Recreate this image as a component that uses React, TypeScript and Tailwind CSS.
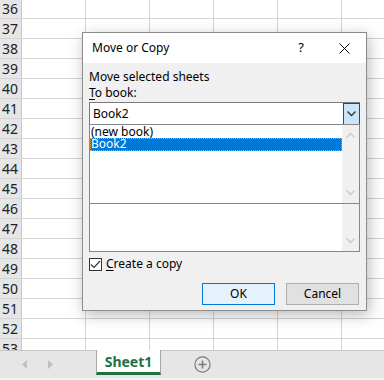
import { Fragment } from 'react';

const rows = Array.from({ length: 18 }, (_, i) => 36 + i);
const cols = [0, 1, 2, 3, 4, 5];

const ui = { fontFamily: '"Segoe UI", "Noto Sans", sans-serif' };

function Chevron({ up, className }: { up?: boolean; className?: string }) {
    return (
        <svg width="9" height="6" viewBox="0 0 9 6" className={className}>
            <path d={up ? 'M0.5 5.5 L4.5 1.5 L8.5 5.5' : 'M0.5 0.5 L4.5 4.5 L8.5 0.5'} fill="none" stroke="currentColor" strokeWidth="1.3" />
        </svg>
    );
}

function Dialog() {
    return (
        <div
            className="absolute left-[82px] top-[32px] w-[285px] h-[279px] border border-[#8c8c8c] bg-[#f0f0f0] shadow-[2px_4px_14px_rgba(0,0,0,0.28)] text-[12px] text-black flex flex-col"
            style={ui}
        >
            {/* Title bar */}
            <div className="h-[30px] bg-white flex items-center pl-[9px]">
                <span className="flex-1">Move or Copy</span>
                <span className="w-[16px] text-center text-[13px] mr-[30px]">?</span>
                <svg width="11" height="11" viewBox="0 0 11 11" className="mr-[16px]">
                    <path d="M0.5 0.5 L10.5 10.5 M10.5 0.5 L0.5 10.5" stroke="#000" strokeWidth="1" />
                </svg>
            </div>

            <div className="px-[6px] pt-[6px] flex flex-col">
                <div className="leading-[16px]">Move selected sheets</div>
                <div className="leading-[16px]">
                    <span className="underline underline-offset-2">T</span>o book:
                </div>

                {/* Combo */}
                <div className="mt-[1px] h-[22px] bg-white border border-b-0 border-[#7a7a7a] flex items-center">
                    <span className="flex-1 pl-[3px]">Book2</span>
                    <div className="w-[17px] h-[22px] -mr-px mt-[1px] border border-[#005499] bg-[#cce4f7] flex items-center justify-center text-[#333]">
                        <Chevron />
                    </div>
                </div>

                {/* List */}
                <div className="h-[80px] bg-white border border-[#828790] flex">
                    <div className="flex-1 flex flex-col">
                        <div className="h-[13px] leading-[13px] pl-[1px]">(new book)</div>
                        <div className="h-[13px] leading-[12px] pl-[1px] bg-[#0078d7] text-white outline outline-1 outline-dotted outline-[#f0a040] -outline-offset-1">Book2</div>
                    </div>
                    <div className="w-[17px] bg-[#f0f0f0] flex flex-col items-center justify-between py-[7px] text-[#c8c8c8]">
                        <Chevron up />
                        <Chevron />
                    </div>
                </div>
                <div className="h-[48px] bg-white border border-t-0 border-[#828790] flex">
                    <div className="flex-1" />
                    <div className="w-[17px] bg-[#f0f0f0] flex flex-col items-center justify-end pb-[7px] text-[#c8c8c8]">
                        <Chevron />
                    </div>
                </div>

                {/* Checkbox */}
                <div className="mt-[4px] flex items-center gap-[4px]">
                    <div className="w-[13px] h-[13px] border border-[#333] bg-white flex items-center justify-center">
                        <svg width="11" height="9" viewBox="0 0 11 9">
                            <path d="M1 4.5 L4 7.5 L10 1" fill="none" stroke="#333" strokeWidth="1.2" />
                        </svg>
                    </div>
                    <span className="leading-[16px]">
                        <span className="underline underline-offset-2">C</span>reate a copy
                    </span>
                </div>

                {/* Buttons */}
                <div className="mt-[11px] flex justify-end gap-[11px] pr-[1px]">
                    <button className="w-[73px] h-[22px] border border-[#0078d7] bg-[#e5f1fb]">OK</button>
                    <button className="w-[73px] h-[22px] border border-[#adadad] bg-[#e1e1e1]">Cancel</button>
                </div>
            </div>
        </div>
    );
}

export default function App() {
    return (
        <div className="relative w-[384px] h-[380px] overflow-hidden bg-white flex flex-col">
            {/* Sheet grid */}
            <div className="h-[350px] overflow-hidden">
                <div className="-mt-px">
                    {rows.map((r) => (
                        <div key={r} className="flex h-[20px] border-b border-[#d4d4d4]">
                            <div
                                className="w-[22px] shrink-0 bg-[#e6e6e6] border-r border-[#c8c8c8] text-[14px] leading-[19px] text-[#222] pl-[2px]"
                                style={{ fontFamily: '"Noto Sans", sans-serif' }}
                            >
                                {r}
                            </div>
                            {cols.map((c) => (
                                <Fragment key={c}>
                                    <div className="w-[64px] shrink-0 border-r border-[#d4d4d4]" />
                                </Fragment>
                            ))}
                        </div>
                    ))}
                </div>
            </div>

            {/* Sheet tabs */}
            <div className="h-[30px] bg-[#e6e6e6] border-t border-[#c6c6c6] border-b-2 border-b-[#f3f3f3] flex items-start">
                <div className="w-[96px] h-[26px] flex items-center gap-[21px] pl-[22px] text-[#c0c0c0]">
                    <svg width="5" height="9" viewBox="0 0 5 9"><path d="M5 0 L0 4.5 L5 9 Z" fill="currentColor" /></svg>
                    <svg width="5" height="9" viewBox="0 0 5 9"><path d="M0 0 L5 4.5 L0 9 Z" fill="currentColor" /></svg>
                </div>
                <div
                    className="-mt-px w-[65px] h-[25px] bg-white border-x border-[#a8a8a8] border-b-[3px] border-b-[#217346] flex items-center justify-center font-bold text-[14px] text-[#217346]"
                    style={{ fontFamily: '"Noto Sans", sans-serif' }}
                >
                    Sheet1
                </div>
                <div className="ml-[33px] h-[26px] flex items-center">
                    <svg width="17" height="17" viewBox="0 0 17 17">
                        <circle cx="8.5" cy="8.5" r="7.6" fill="none" stroke="#7a7a7a" strokeWidth="1.2" />
                        <path d="M8.5 4.5 V12.5 M4.5 8.5 H12.5" stroke="#7a7a7a" strokeWidth="1.6" />
                    </svg>
                </div>
            </div>

            <Dialog />
        </div>
    );
}
